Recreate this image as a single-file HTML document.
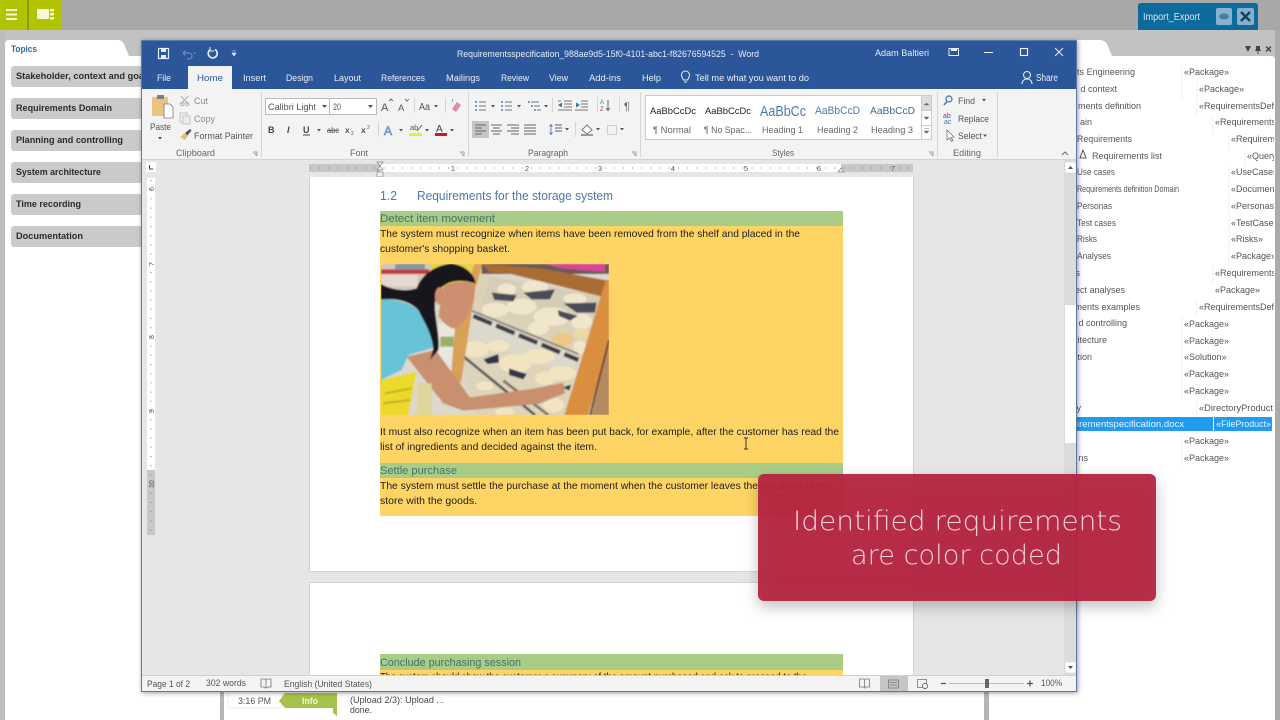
<!DOCTYPE html>
<html><head><meta charset="utf-8"><style>
html,body{margin:0;padding:0;width:1280px;height:720px;overflow:hidden;background:#fff}
svg{display:block;filter:blur(.35px)}
text{font-family:"Liberation Sans",sans-serif;white-space:pre}
.r{font-size:9.5px;fill:#555}
.k{font-size:9.5px;fill:#8c8c8c}
.w{font-size:9.5px;fill:#e8eef8}
.b{font-size:10.5px;fill:#1c1c1c}
.h{font-size:11px;fill:#3f7468}
.l{font-size:9.5px;fill:#2c2c2c;font-weight:bold}
.p{font-size:9.5px;fill:#555}
.g{font-size:9px;fill:#666}
</style></head><body>
<svg width="1280" height="720" viewBox="0 0 1280 720" xmlns="http://www.w3.org/2000/svg">
<defs>
<filter id="bl" x="-5%" y="-5%" width="110%" height="110%"><feGaussianBlur stdDeviation="2.2"/></filter>
<filter id="sh" x="-5%" y="-5%" width="110%" height="110%"><feDropShadow dx="1" dy="1" stdDeviation="2.5" flood-color="#000" flood-opacity=".4"/></filter>
<filter id="sh2" x="-10%" y="-15%" width="120%" height="135%"><feDropShadow dx="0" dy="6" stdDeviation="7" flood-color="#000" flood-opacity=".25"/></filter>
<clipPath id="ph"><rect x="18" y="12" width="684" height="453"/></clipPath>
<clipPath id="st"><rect x="1077" y="60" width="197" height="420"/></clipPath>
<clipPath id="dc"><rect x="310" y="177" width="603" height="498"/></clipPath>
<clipPath id="s1"><rect x="648" y="100" width="272" height="36"/></clipPath>
</defs>

<!-- backdrop -->
<rect width="1280" height="720" fill="#fff"/>
<rect width="1280" height="30" fill="#a8a8a8"/>
<rect y="30" width="1280" height="30" fill="#c2c2c2"/>
<rect y="30" width="5" height="690" fill="#bdbdbd"/>
<rect x="1275" y="30" width="5" height="690" fill="#ababab"/>
<path d="M5 44Q5 40 9 40H118Q122 40 124 44L129 56H145V720H5Z" fill="#fff"/>
<path d="M1070 40H1100Q1104 40 1107 44L1112 56H1271Q1275 56 1275 60V720H1070Z" fill="#fff"/>
<!-- top left -->
<rect width="27" height="30" fill="#b2c400"/><rect x="29" width="33" height="30" fill="#b2c400"/>
<rect x="27" width="2" height="30" fill="#8b9a08"/>
<rect x="6" y="9" width="11" height="2" fill="#f3f6d0"/><rect x="6" y="13.500" width="11" height="2" fill="#f3f6d0"/><rect x="6" y="18" width="11" height="2" fill="#f3f6d0"/>
<rect x="37" y="9" width="12" height="10" rx="1" fill="#f4f7d8"/><rect x="50" y="9" width="4" height="2.500" fill="#f4f7d8"/><rect x="50" y="13" width="4" height="2.500" fill="#f4f7d8"/><rect x="50" y="17" width="4" height="2.500" fill="#f4f7d8"/>
<!-- import export -->
<path d="M1138 6Q1138 3 1141 3H1255Q1258 3 1258 6V30H1138Z" fill="#0d6a9c"/>
<text x="1143" y="20" font-size="10" fill="#d8e8f2" textLength="57" lengthAdjust="spacingAndGlyphs">Import_Export</text>
<rect x="1216" y="8" width="16" height="17" rx="2" fill="#86b4d0"/><ellipse cx="1224" cy="16.500" rx="5" ry="3" fill="#4d7d9c"/>
<rect x="1237" y="8" width="17" height="17" rx="2" fill="#86b0cc"/><path d="M1241 12L1250 21M1250 12L1241 21" stroke="#15405e" stroke-width="2.500"/>
<path d="M1245 46h6l-3 6zM1256 46h4v3l1 2h-2.500v3h-1v-3h-2.500l1-2z" fill="#444"/><path d="M1266 46.500l5 5M1271 46.500l-5 5" stroke="#444" stroke-width="1.400"/>

<!-- left panel -->
<text x="11" y="52" font-size="9.500" font-weight="bold" fill="#2d6ca6" textLength="26" lengthAdjust="spacingAndGlyphs">Topics</text>
<g fill="#cacaca"><rect x="11" y="66" width="140" height="21" rx="3"/><rect x="11" y="98" width="140" height="21" rx="3"/><rect x="11" y="130" width="140" height="21" rx="3"/><rect x="11" y="162" width="140" height="21" rx="3"/><rect x="11" y="194" width="140" height="21" rx="3"/><rect x="11" y="226" width="140" height="21" rx="3"/></g>
<text class="l" x="16" y="79" textLength="128" lengthAdjust="spacingAndGlyphs">Stakeholder, context and goa</text>
<text class="l" x="16" y="111" textLength="96" lengthAdjust="spacingAndGlyphs">Requirements Domain</text>
<text class="l" x="16" y="143" textLength="107" lengthAdjust="spacingAndGlyphs">Planning and controlling</text>
<text class="l" x="16" y="175" textLength="85" lengthAdjust="spacingAndGlyphs">System architecture</text>
<text class="l" x="16" y="207" textLength="65" lengthAdjust="spacingAndGlyphs">Time recording</text>
<text class="l" x="16" y="239" textLength="67" lengthAdjust="spacingAndGlyphs">Documentation</text>

<!-- right panel -->
<g font-size="9" fill="#555">
<text x="1135" y="75" text-anchor="end" textLength="58" lengthAdjust="spacingAndGlyphs">ts Engineering</text>
<text x="1117" y="92" text-anchor="end">d context</text>
<text x="1141" y="109" text-anchor="end">ments definition</text>
<text x="1092" y="125" text-anchor="end">ain</text>
<text x="1077" y="142" textLength="55" lengthAdjust="spacingAndGlyphs">Requirements</text>
<text x="1092" y="159" textLength="70" lengthAdjust="spacingAndGlyphs">Requirements list</text>
<text x="1077" y="175" textLength="38" lengthAdjust="spacingAndGlyphs">Use cases</text>
<text x="1077" y="192" textLength="102" lengthAdjust="spacingAndGlyphs">Requirements definition Domain</text>
<text x="1077" y="209" textLength="35" lengthAdjust="spacingAndGlyphs">Personas</text>
<text x="1077" y="226" textLength="39" lengthAdjust="spacingAndGlyphs">Test cases</text>
<text x="1077" y="242" textLength="20" lengthAdjust="spacingAndGlyphs">Risks</text>
<text x="1077" y="259" textLength="34" lengthAdjust="spacingAndGlyphs">Analyses</text>
<text x="1080" y="276" text-anchor="end">s</text>
<text x="1125" y="293" text-anchor="end">ect analyses</text>
<text x="1140" y="310" text-anchor="end">ments examples</text>
<text x="1127" y="326" text-anchor="end">d controlling</text>
<text x="1107" y="343" text-anchor="end">itecture</text>
<text x="1092" y="360" text-anchor="end">tion</text>
<text x="1081" y="411" text-anchor="end">y</text>
<text x="1088" y="461" text-anchor="end">ns</text>
</g>
<path d="M1083 150l-3 8h6z" fill="none" stroke="#555"/>
<g stroke="#f0f0f0"><path d="M1182 66V100M1197 83V116M1213 116V134M1229 133V150M1245 149V166M1229 166V266M1213 266V284M1197 300V316M1182 316V400M1197 400V417M1182 434V466"/></g>
<rect x="1077" y="417" width="136" height="14" fill="#1f9cf0"/><rect x="1214" y="417" width="58" height="14" fill="#1f9cf0"/>
<text x="1077" y="427" font-size="9" fill="#eaf5ff" textLength="107" lengthAdjust="spacingAndGlyphs">irementspecification.docx</text>
<g font-size="9" fill="#555" clip-path="url(#st)">
<text x="1184" y="75">«Package»</text><text x="1199" y="92">«Package»</text><text x="1199" y="109">«RequirementsDef</text>
<text x="1215" y="125">«Requirements</text><text x="1231" y="142">«Requirem</text><text x="1247" y="159">«Query</text>
<text x="1231" y="175">«UseCases</text><text x="1231" y="192">«Documents</text><text x="1231" y="209">«Personas</text>
<text x="1231" y="226">«TestCases</text><text x="1231" y="242">«Risks»</text><text x="1231" y="259">«Package»</text>
<text x="1215" y="276">«Requirements</text><text x="1215" y="293">«Package»</text><text x="1199" y="310">«RequirementsDef</text>
<text x="1184" y="327">«Package»</text><text x="1184" y="344">«Package»</text><text x="1184" y="360">«Solution»</text>
<text x="1184" y="377">«Package»</text><text x="1184" y="394">«Package»</text><text x="1199" y="411" textLength="74" lengthAdjust="spacingAndGlyphs">«DirectoryProduct</text>
<text x="1216" y="427" fill="#eaf5ff" textLength="55" lengthAdjust="spacingAndGlyphs">«FileProduct»</text>
<text x="1184" y="444">«Package»</text><text x="1184" y="461">«Package»</text>
</g>

<!-- bottom -->
<rect x="220" y="690" width="4" height="30" fill="#b5b5b5"/><rect x="984" y="690" width="5" height="30" fill="#b5b5b5"/>
<rect x="228" y="688" width="54" height="20" rx="3" fill="#fff" stroke="#eee"/>
<text x="238" y="704" font-size="9.500" fill="#555" textLength="33" lengthAdjust="spacingAndGlyphs">3:16 PM</text>
<path d="M279 701L285 693H337V716L333 713V708H285Z" fill="#a7c24a"/>
<text x="302" y="704" font-size="9.500" fill="#f2f6e0" textLength="16" font-weight="bold" lengthAdjust="spacingAndGlyphs">Info</text>
<text x="350" y="703" font-size="9.500" fill="#444" textLength="94" lengthAdjust="spacingAndGlyphs">(Upload 2/3): Upload ...</text>
<text x="350" y="713" font-size="9.500" fill="#444" textLength="22" lengthAdjust="spacingAndGlyphs">done.</text>

<!-- word window -->
<g filter="url(#sh)"><rect x="141" y="40" width="936" height="652" fill="#e6e6e6"/></g>
<rect x="141" y="40" width="936" height="49" fill="#2b579a"/>
<rect x="142" y="89" width="934" height="70" fill="#f3f3f3"/>
<rect x="142" y="159" width="934" height="1" fill="#d4d4d4"/>

<!-- quick access -->
<g stroke="#e8eef8" fill="none"><rect x="158.500" y="48.500" width="10" height="10" stroke-width="1.200"/><rect x="161" y="49" width="5" height="3" fill="#e8eef8" stroke="none"/><rect x="161" y="55" width="5" height="3.500" fill="#e8eef8" stroke="none"/>
<path d="M183 53h6a3 3 0 0 1 0 6h-2M183 53l2.500-2.500M183 53l2.500 2.500" stroke="#6d8cbc" stroke-width="1.200"/>
<path d="M215 49.500a4.500 4.500 0 1 1-5 .3" stroke-width="1.600"/><path d="M210 47v4h4" stroke-width="1" /></g>
<path d="M193 52.500h3l-1.500 2z" fill="#6d8cbc"/>
<path d="M232 51h4M232 53h4l-2 3z" fill="#e8eef8" stroke="#e8eef8" stroke-width=".6"/>
<text class="w" x="457" y="57" textLength="302" lengthAdjust="spacingAndGlyphs">Requirementsspecification_988ae9d5-15f0-4101-abc1-f82676594525  -  Word</text>
<text class="w" x="875" y="56" textLength="54" lengthAdjust="spacingAndGlyphs">Adam Baltieri</text>
<rect x="949" y="48.500" width="9.500" height="7" fill="none" stroke="#e8eef8"/><path d="M951 48h6v3h-6z" fill="#e8eef8"/>
<path d="M984 52.500h9" stroke="#e8eef8"/><rect x="1020.500" y="48.500" width="7" height="7" fill="none" stroke="#f2f5fa" stroke-width="1.100"/><path d="M1055 48l8 8M1063 48l-8 8" stroke="#e8eef8"/>

<!-- tabs -->
<rect x="188" y="66" width="44" height="23" fill="#f3f3f3"/>
<g><text class="w" x="157" y="81" textLength="14" lengthAdjust="spacingAndGlyphs">File</text>
<text x="197" y="81" font-size="9.500" fill="#2b579a" textLength="26" lengthAdjust="spacingAndGlyphs">Home</text>
<text class="w" x="243" y="81" textLength="23" lengthAdjust="spacingAndGlyphs">Insert</text>
<text class="w" x="286" y="81" textLength="27" lengthAdjust="spacingAndGlyphs">Design</text>
<text class="w" x="334" y="81" textLength="27" lengthAdjust="spacingAndGlyphs">Layout</text>
<text class="w" x="381" y="81" textLength="44" lengthAdjust="spacingAndGlyphs">References</text>
<text class="w" x="446" y="81" textLength="34" lengthAdjust="spacingAndGlyphs">Mailings</text>
<text class="w" x="501" y="81" textLength="28" lengthAdjust="spacingAndGlyphs">Review</text>
<text class="w" x="549" y="81" textLength="19" lengthAdjust="spacingAndGlyphs">View</text>
<text class="w" x="589" y="81" textLength="32" lengthAdjust="spacingAndGlyphs">Add-ins</text>
<text class="w" x="642" y="81" textLength="19" lengthAdjust="spacingAndGlyphs">Help</text>
<text class="w" x="695" y="81" textLength="114" lengthAdjust="spacingAndGlyphs">Tell me what you want to do</text>
<text class="w" x="1036" y="81" style="font-size:10px" textLength="22" lengthAdjust="spacingAndGlyphs">Share</text></g>
<path d="M683.500 80c-1-2-2-3-2-5a4 4 0 0 1 8 0c0 2-1 3-2 5zM684 82h3" fill="none" stroke="#e8eef8"/>
<circle cx="1027" cy="75" r="3.500" fill="none" stroke="#e8eef8"/><path d="M1022 84c0-3 2-5 5-5s5 2 5 5" fill="none" stroke="#e8eef8"/>

<!-- clipboard -->
<rect x="152" y="97" width="16" height="19" rx="1" fill="#e8c583"/><rect x="157" y="95" width="7" height="4" fill="#7d7d7d"/><path d="M164 104h6l3 3v11h-9z" fill="#fff" stroke="#777" stroke-width=".8"/>
<text class="r" x="150" y="130" textLength="21" lengthAdjust="spacingAndGlyphs">Paste</text><path d="M158 137h4l-2 2.500z" fill="#555"/>
<path d="M181 96l7 8M188 96l-7 8" stroke="#b4b4b4" stroke-width="1.200"/><circle cx="182" cy="104" r="1.800" fill="none" stroke="#b4b4b4"/><circle cx="187" cy="104" r="1.800" fill="none" stroke="#b4b4b4"/>
<text class="k" x="194" y="104" textLength="14" lengthAdjust="spacingAndGlyphs">Cut</text>
<rect x="180" y="113" width="7" height="9" fill="#eee" stroke="#bbb" stroke-width=".8"/><rect x="183" y="116" width="7" height="8" fill="#eee" stroke="#bbb" stroke-width=".8"/>
<text class="k" x="194" y="122" textLength="21" lengthAdjust="spacingAndGlyphs">Copy</text>
<path d="M180 137l5-4 3 3-3 4z" fill="#e6c070"/><path d="M185 133l5-4 1.500 1.500-4 5z" fill="#555"/>
<text class="r" x="194" y="139" textLength="59" lengthAdjust="spacingAndGlyphs">Format Painter</text>
<text class="g" x="176" y="156" textLength="39" lengthAdjust="spacingAndGlyphs">Clipboard</text>
<g stroke="#d6d6d6"><path d="M261.500 92V157M468.500 92V157M640.500 92V157M937.500 92V157M997.500 92V157"/></g>
<path d="M253 152h4v4M254 153l3 3" stroke="#888" fill="none" stroke-width=".7"/><path d="M460 152h4v4M461 153l3 3" stroke="#888" fill="none" stroke-width=".7"/><path d="M632 152h4v4M633 153l3 3" stroke="#888" fill="none" stroke-width=".7"/><path d="M929 152h4v4M930 153l3 3" stroke="#888" fill="none" stroke-width=".7"/>
<!-- font -->
<rect x="265.500" y="98.500" width="64" height="16" fill="#fff" stroke="#bbb"/><rect x="329.500" y="98.500" width="47" height="16" fill="#fff" stroke="#bbb"/>
<text class="p" x="268" y="110" textLength="48" lengthAdjust="spacingAndGlyphs">Calibri Light</text><text class="p" x="333" y="110" textLength="8" lengthAdjust="spacingAndGlyphs">20</text>
<path d="M322 105h5l-2.500 3zM368 105h5l-2.500 3z" fill="#555"/>
<text x="381" y="111" font-size="11" fill="#555">A</text><text x="398" y="111" font-size="9.500" fill="#555">A</text>
<path d="M389 101l2-2 2 2M405 99l2 2 2-2" stroke="#555" fill="none" stroke-width=".8"/>
<path d="M414.500 98V113M445.500 98V113" stroke="#d6d6d6"/>
<text x="419" y="110" font-size="10" fill="#555" textLength="11" lengthAdjust="spacingAndGlyphs">Aa</text><path d="M434 105h4l-2 2.500z" fill="#555"/>
<path d="M452 109l5-7 4 3-5 7z" fill="#e38aa0"/><path d="M453 99l-1 3" stroke="#999"/>
<text x="268" y="133" font-size="9" font-weight="bold" fill="#444">B</text><text x="287" y="133" font-size="9" font-style="italic" font-weight="bold" fill="#444">I</text>
<text x="303" y="133" font-size="9" font-weight="bold" fill="#444">U</text><path d="M303 135h7" stroke="#444"/><path d="M317 129h4l-2 2.500z" fill="#555"/>
<text x="327" y="133" font-size="8" fill="#555" text-decoration="line-through" textLength="12" lengthAdjust="spacingAndGlyphs">abc</text>
<text x="345" y="133" font-size="8.500" font-weight="bold" fill="#555">x</text><text x="351" y="135" font-size="5" fill="#555">2</text>
<text x="361" y="133" font-size="8.500" font-weight="bold" fill="#555">x</text><text x="367" y="129" font-size="5" fill="#555">2</text>
<path d="M378.500 122V137" stroke="#d6d6d6"/>
<text x="384" y="135" font-size="12" fill="#dbe7f4" stroke="#5b8dc4" stroke-width=".7">A</text><path d="M399 129h4l-2 2.500zM425 129h4l-2 2.500zM450 129h4l-2 2.500z" fill="#555"/>
<text x="410" y="130" font-size="7.500" fill="#555">ab</text><path d="M417 131l5-6" stroke="#777"/><rect x="409" y="133" width="13" height="3" fill="#f2ea2c"/>
<text x="436" y="132" font-size="10" fill="#444">A</text><rect x="435" y="133" width="12" height="3" fill="#d01818"/>
<!-- paragraph -->
<g fill="#4a7fb5"><circle cx="476" cy="102" r="1"/><circle cx="476" cy="106" r="1"/><circle cx="476" cy="110" r="1"/><circle cx="502" cy="102" r="1"/><circle cx="502" cy="106" r="1"/><circle cx="502" cy="110" r="1"/><circle cx="529" cy="102" r="1"/><circle cx="532" cy="106" r="1"/><circle cx="535" cy="110" r="1"/></g>
<g stroke="#777"><path d="M479 102h7M479 106h7M479 110h7M505 102h7M505 106h7M505 110h7M531 102h8M534 106h6M537 110h4"/></g>
<path d="M491 105h4l-2 2.500zM517 105h4l-2 2.500zM544 105h4l-2 2.500z" fill="#555"/>
<g stroke="#777"><path d="M564 101h8M564 104h8M564 107h8M558 110h14M558 101h3M581 101h7M581 104h7M581 107h7M575 110h13"/></g>
<path d="M558 105l4-2.500v5zM580 105l-4-2.500v5z" fill="#3d75b0"/>
<path d="M552.500 97V112M597.500 97V112M619.500 97V112" stroke="#d6d6d6"/>
<text x="600" y="104" font-size="6" fill="#3d75b0">A</text><text x="600" y="111" font-size="6" fill="#a04040">Z</text><path d="M608 100v10M606 108l2 2.500 2-2.500" stroke="#666" fill="none"/>
<text x="624" y="110" font-size="11" fill="#666">¶</text>
<rect x="472" y="121" width="17" height="17" fill="#c6c6c6"/>
<g stroke="#666"><path d="M475 125h11M475 128h7M475 131h11M475 134h7M491 125h11M493 128h7M491 131h11M493 134h7M507 125h12M511 128h8M507 131h12M511 134h8M524 125h12M524 128h12M524 131h12M524 134h12M555 125h7M555 128h7M555 131h7"/></g>
<path d="M551 125v9M549.500 126.500l1.500-2 1.500 2M549.500 132.500l1.500 2 1.500-2" stroke="#3d75b0" fill="none" stroke-width=".8"/>
<path d="M565 128h4l-2 2.500zM596 128h4l-2 2.500zM620 128h4l-2 2.500z" fill="#555"/>
<path d="M575.500 122V137" stroke="#d6d6d6"/>
<path d="M582 130l5-5 5 5-5 4z" fill="#fff" stroke="#777"/><rect x="581" y="134" width="12" height="2" fill="#999"/>
<rect x="607.500" y="125.500" width="9" height="9" fill="none" stroke="#aaa" stroke-dasharray="1 1"/>
<text class="g" x="528" y="156" textLength="40" lengthAdjust="spacingAndGlyphs">Paragraph</text>
<text class="g" x="350" y="156" textLength="18" lengthAdjust="spacingAndGlyphs">Font</text>
<!-- styles -->
<rect x="645.500" y="95.500" width="286" height="44" fill="#fff" stroke="#ccc"/>
<rect x="921" y="96" width="10" height="14" fill="#dcdcdc"/><path d="M921.500 96V139M921.500 110.500H931M921.500 125.500H931" stroke="#ccc"/>
<path d="M924 105h5l-2.500-2zM924 117h5l-2.500 2.500zM924 131h5l-2.500 2.500zM924 128.500h5" fill="#666" stroke="#666" stroke-width=".4"/>
<g clip-path="url(#s1)">
<text x="650" y="114" font-size="9.500" fill="#222" textLength="46" lengthAdjust="spacingAndGlyphs">AaBbCcDc</text>
<text x="705" y="114" font-size="9.500" fill="#222" textLength="46" lengthAdjust="spacingAndGlyphs">AaBbCcDc</text>
<text x="760" y="116" font-size="15" fill="#4a7bad" textLength="46" lengthAdjust="spacingAndGlyphs">AaBbCc</text>
<text x="815" y="114" font-size="11" fill="#4a7bad" textLength="45" lengthAdjust="spacingAndGlyphs">AaBbCcD</text>
<text x="870" y="114" font-size="10" fill="#3d6a96" textLength="45" lengthAdjust="spacingAndGlyphs">AaBbCcD</text>
</g>
<text class="p" x="653" y="133" textLength="38" lengthAdjust="spacingAndGlyphs" style="fill:#666">¶ Normal</text>
<text class="p" x="704" y="133" textLength="48" lengthAdjust="spacingAndGlyphs" style="fill:#666">¶ No Spac...</text>
<text class="p" x="762" y="133" textLength="41" lengthAdjust="spacingAndGlyphs" style="fill:#666">Heading 1</text>
<text class="p" x="817" y="133" textLength="41" lengthAdjust="spacingAndGlyphs" style="fill:#666">Heading 2</text>
<text class="p" x="871" y="133" textLength="42" lengthAdjust="spacingAndGlyphs" style="fill:#666">Heading 3</text>
<text class="g" x="772" y="156" textLength="22" lengthAdjust="spacingAndGlyphs">Styles</text>
<!-- editing -->
<circle cx="949" cy="99" r="3" fill="none" stroke="#3d75b0" stroke-width="1.200"/><path d="M947 101.500l-3 3.500" stroke="#3d75b0" stroke-width="1.500"/>
<text class="p" x="958" y="104" textLength="17" lengthAdjust="spacingAndGlyphs">Find</text><path d="M982 99h4l-2 2.500z" fill="#555"/>
<text x="943" y="118" font-size="7" fill="#7a3fa0">ab</text><text x="944" y="124" font-size="7" fill="#3d75b0">ac</text>
<text class="p" x="958" y="122" textLength="31" lengthAdjust="spacingAndGlyphs">Replace</text>
<path d="M947 130v10l2.500-2 2 3.500 1.500-1-2-3 3-.5z" fill="#fff" stroke="#777" stroke-width=".8"/>
<text class="p" x="958" y="139" textLength="24" lengthAdjust="spacingAndGlyphs">Select</text><path d="M983 134.500h4l-2 2.500z" fill="#555"/>
<text class="g" x="953" y="156" textLength="28" lengthAdjust="spacingAndGlyphs">Editing</text>
<path d="M1062 155l3-3 3 3" fill="none" stroke="#666"/>

<!-- rulers -->
<rect x="146" y="162" width="10" height="10" fill="#fff"/><path d="M149.500 165v4h3.500" stroke="#444" fill="none"/>
<rect x="309" y="164" width="71" height="8" fill="#c8c8c8"/><rect x="380" y="164" width="461" height="8" fill="#fff"/><rect x="841" y="164" width="72" height="8" fill="#c8c8c8"/>
<path d="M310 168H913" stroke="#777" stroke-dasharray="1 8.200" fill="none"/>
<g font-size="7.500" fill="#555" text-anchor="middle"><text x="453" y="171">1</text><text x="527" y="171">2</text><text x="600" y="171">3</text><text x="673" y="171">4</text><text x="746" y="171">5</text><text x="819" y="171">6</text><text x="893" y="171">7</text></g>
<path d="M377 162h6l-3 4 3 4h-6l3-4zM377 172h6v5h-6z" fill="#f2f2f2" stroke="#888" stroke-width=".7"/>
<path d="M838 172l3-4 3 4z" fill="#f2f2f2" stroke="#888" stroke-width=".7"/>
<rect x="147" y="178" width="8" height="292" fill="#fff"/><rect x="147" y="470" width="8" height="65" fill="#c8c8c8"/>
<path d="M151 180V535" stroke="#777" stroke-dasharray="1 8.200"/>
<g font-size="7" fill="#555"><text transform="translate(149,185) rotate(-90) translate(-6,5)">6</text><text transform="translate(149,260) rotate(-90) translate(-6,5)">7</text><text transform="translate(149,333) rotate(-90) translate(-6,5)">8</text><text transform="translate(149,407) rotate(-90) translate(-6,5)">9</text><text transform="translate(149,482) rotate(-90) translate(-6,5)">10</text></g>

<!-- pages -->
<rect x="310" y="177" width="603" height="394" fill="#fff"/><path d="M309.500 177V571.500H913.500V177" fill="none" stroke="#d2d2d2"/>
<rect x="310" y="583" width="603" height="92" fill="#fff"/><path d="M309.500 675V582.500H913.500V675" fill="none" stroke="#d2d2d2"/>
<text x="380" y="200" font-size="12.500" fill="#4b78a8" textLength="17" lengthAdjust="spacingAndGlyphs">1.2</text>
<text x="417" y="200" font-size="12.500" fill="#4b78a8" textLength="196" lengthAdjust="spacingAndGlyphs">Requirements for the storage system</text>
<rect x="380" y="211" width="463" height="305" fill="#fed565"/>
<rect x="380" y="211" width="463" height="15" fill="#a9cc87"/><rect x="380" y="463" width="463" height="15" fill="#a9cc87"/>
<text class="h" x="380" y="222" textLength="115" lengthAdjust="spacingAndGlyphs">Detect item movement</text>
<text class="b" x="380" y="237" textLength="420" lengthAdjust="spacingAndGlyphs">The system must recognize when items have been removed from the shelf and placed in the</text>
<text class="b" x="380" y="252" textLength="130" lengthAdjust="spacingAndGlyphs">customer's shopping basket.</text>

<!-- photo -->
<g transform="translate(375,260) scale(.33333)"><g clip-path="url(#ph)"><g filter="url(#bl)">
<rect x="18" y="12" width="684" height="453" fill="#dcd8cc"/>
<rect x="18" y="12" width="150" height="75" fill="#d2c8bc"/><rect x="18" y="28" width="145" height="14" fill="#c23a3a"/><rect x="60" y="12" width="90" height="16" fill="#7f96aa"/>
<rect x="18" y="44" width="110" height="36" fill="#e4d8d0"/>
<path d="M165 12H320V130L290 140 200 160Z" fill="#e8d24a"/>
<rect x="320" y="12" width="382" height="30" fill="#6a5a58"/><path d="M510 12H690V36L560 25Z" fill="#d8459a"/>
<path d="M310 40L690 110 650 310 280 150Z" fill="#dcd2b8"/>
<path d="M345 50L690 110 680 200 320 130Z" fill="#d6cdb8"/>
<g fill="#f0e6cc"><ellipse cx="395" cy="88" rx="28" ry="18"/><ellipse cx="480" cy="82" rx="40" ry="20"/><ellipse cx="600" cy="116" rx="35" ry="16"/><ellipse cx="360" cy="150" rx="40" ry="22"/><ellipse cx="440" cy="140" rx="45" ry="24"/><ellipse cx="530" cy="170" rx="55" ry="28"/><ellipse cx="490" cy="205" rx="32" ry="20"/><ellipse cx="620" cy="185" rx="32" ry="24"/><ellipse cx="615" cy="262" rx="20" ry="20"/><ellipse cx="620" cy="220" rx="24" ry="16" fill="#ecd8a8"/></g>
<ellipse cx="562" cy="238" rx="32" ry="20" fill="#ecc888"/>
<g fill="#4a4c56"><path d="M350 98L425 105 415 124 358 120Z"/><path d="M445 98L540 88 525 118 470 118Z"/><path d="M565 130L665 128 660 158 605 158Z"/><path d="M548 150L608 168 585 182 552 168Z"/></g>
<path d="M295 168L610 300" stroke="#3e3e46" stroke-width="13" stroke-dasharray="60 14"/><path d="M285 150L610 282" stroke="#7a7a7a" stroke-width="5"/>
<path d="M250 230L600 345 575 465H300L250 290Z" fill="#ded4bc"/>
<g fill="#f2e4c0"><ellipse cx="300" cy="268" rx="42" ry="24"/><ellipse cx="370" cy="258" rx="32" ry="18"/><ellipse cx="420" cy="310" rx="50" ry="28"/><ellipse cx="490" cy="290" rx="50" ry="22"/><ellipse cx="560" cy="340" rx="42" ry="22"/><ellipse cx="510" cy="355" rx="30" ry="20"/><ellipse cx="535" cy="435" rx="32" ry="22"/><ellipse cx="390" cy="455" rx="30" ry="12"/><ellipse cx="330" cy="378" rx="25" ry="14"/></g>
<g fill="#33364a"><path d="M325 298L370 282 372 308 338 312Z"/><path d="M402 325L455 342 445 358 402 345Z"/><path d="M562 382l26-8-5 18z"/></g>
<path d="M260 285L480 465" stroke="#55555a" stroke-width="8"/><path d="M385 362L520 465" stroke="#7a6e5e" stroke-width="8"/>
<path d="M190 190H245L232 420H190Z" fill="#e8e6de"/><rect x="196" y="230" width="40" height="30" fill="#9ab068"/>
<path d="M298 12H322L300 90 258 370 228 345 240 200Z" fill="#d9a058"/>
<path d="M322 12L500 26 700 62 690 112 400 40 345 38Z" fill="#a96c32"/>
<path d="M692 60H702V250L640 465H568L622 290Z" fill="#d98e40"/>
<path d="M702 240L645 465H702Z" fill="#b58a60"/><path d="M702 240L645 465" stroke="#1c1c1c" stroke-width="4"/>
<path d="M18 115C60 118 100 125 130 150 160 190 178 240 180 262L100 285 80 330 18 360Z" fill="#67c3d6"/>
<path d="M95 290L182 270 285 412 480 385 565 368 570 400 490 432 265 452 205 430Z" fill="#c8906e"/>
<path d="M18 360L125 335 100 465H18Z" fill="#ecd92a"/><path d="M30 400L110 385M25 430L105 420" stroke="#b8a822" stroke-width="5"/>
<rect x="125" y="370" width="45" height="95" fill="#dcd69c"/>
<path d="M205 80C230 62 280 62 297 72 300 100 300 130 285 150 275 170 260 205 235 205 220 205 205 185 190 170Z" fill="#cc9070"/>
<path d="M18 72C50 90 90 95 125 85 140 40 190 12 230 12 270 14 300 45 302 70 270 60 230 60 210 75 190 85 178 110 180 150 185 200 195 240 190 270L165 300 175 265C170 220 150 190 130 150 100 120 60 115 18 118Z" fill="#15151a"/>
<ellipse cx="194" cy="108" rx="14" ry="26" fill="#cc9070"/>
</g></g></g>

<text class="b" x="380" y="435" textLength="459" lengthAdjust="spacingAndGlyphs">It must also recognize when an item has been put back, for example, after the customer has read the</text>
<text class="b" x="380" y="450" textLength="217" lengthAdjust="spacingAndGlyphs">list of ingredients and decided against the item.</text>
<text class="h" x="380" y="474" textLength="77" lengthAdjust="spacingAndGlyphs">Settle purchase</text>
<text class="b" x="380" y="489" textLength="451" lengthAdjust="spacingAndGlyphs">The system must settle the purchase at the moment when the customer leaves the exit zone of the</text>
<text class="b" x="380" y="504" textLength="97" lengthAdjust="spacingAndGlyphs">store with the goods.</text>
<rect x="380" y="654" width="463" height="16" fill="#a9cc87"/><rect x="380" y="670" width="463" height="5" fill="#fed565"/>
<text class="h" x="380" y="666" textLength="141" lengthAdjust="spacingAndGlyphs">Conclude purchasing session</text>
<text class="b" x="380" y="680" textLength="427" lengthAdjust="spacingAndGlyphs">The system should show the customer a summary of the amount purchased and ask to proceed to the</text>
<path d="M744 438h4M746 438v11M744 449h4" stroke="#333" fill="none"/>

<!-- scrollbar -->
<rect x="1064" y="160" width="12" height="515" fill="#dcdcdc"/>
<rect x="1065" y="162" width="11" height="11" fill="#fff" stroke="#ccc" stroke-width=".5"/><path d="M1068 169h5l-2.500-3z" fill="#555"/>
<rect x="1065" y="662" width="11" height="11" fill="#fff" stroke="#ccc" stroke-width=".5"/><path d="M1068 666h5l-2.500 3z" fill="#555"/>
<rect x="1065" y="305" width="11" height="138" fill="#fff"/>

<!-- status bar -->
<rect x="142" y="675" width="934" height="16" fill="#f3f3f3"/><rect x="142" y="675" width="934" height="1" fill="#d0d0d0"/>
<text class="p" x="147" y="687" textLength="43" lengthAdjust="spacingAndGlyphs">Page 1 of 2</text>
<text class="p" x="206" y="686" textLength="40" lengthAdjust="spacingAndGlyphs">302 words</text>
<path d="M261 679h4l1 1 1-1h4v8h-3l-2 1-2-1h-3zM266 680v7" fill="none" stroke="#777" stroke-width=".8"/>
<text class="p" x="284" y="687" textLength="88" lengthAdjust="spacingAndGlyphs">English (United States)</text>
<rect x="880" y="676" width="28" height="15" fill="#c6c6c6"/>
<path d="M859.500 679h4l1 1 1-1h4v8h-4l-1 1-1-1h-4zM864.500 680v7M888.500 680h10v8h-10zM890 682.500h7M890 685h7" fill="none" stroke="#777" stroke-width=".8"/>
<rect x="917.500" y="679.500" width="9" height="8" fill="none" stroke="#777" stroke-width=".8"/><circle cx="925" cy="686" r="2.500" fill="#fff" stroke="#666"/>
<path d="M941 683.500h5M1027 683.500h6M1030 680.500v6" stroke="#555" stroke-width="1.200"/><path d="M949 683.500H1024" stroke="#bbb"/><rect x="985" y="679" width="4" height="9" fill="#666"/>
<text class="p" x="1041" y="686" textLength="21" lengthAdjust="spacingAndGlyphs">100%</text>
<rect x="141.500" y="40.500" width="935" height="651" fill="none" stroke="#5b78a8"/>

<!-- caption -->
<g filter="url(#sh2)"><rect x="758" y="474" width="398" height="127" rx="6" fill="#b4233f" fill-opacity=".94"/></g>
<text x="793" y="530" font-size="27" style="font-family:'DejaVu Sans',sans-serif;font-weight:300" fill="#ecd3d9" textLength="329" lengthAdjust="spacingAndGlyphs">Identified requirements</text>
<text x="851" y="564" font-size="27" style="font-family:'DejaVu Sans',sans-serif;font-weight:300" fill="#ecd3d9" textLength="211" lengthAdjust="spacingAndGlyphs">are color coded</text>
</svg>
</body></html>
